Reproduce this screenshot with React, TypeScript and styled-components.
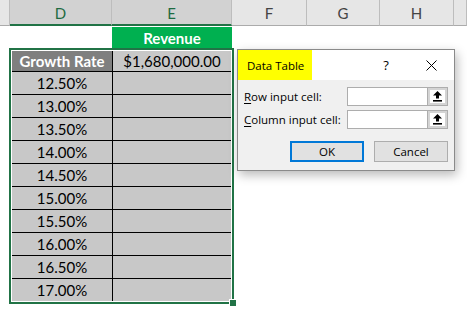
import React from 'react';
import styled, { createGlobalStyle } from 'styled-components';

const GlobalStyle = createGlobalStyle`
  html, body {
    margin: 0;
    padding: 0;
    background: #ffffff;
  }
  body {
    font-family: Lato, "Liberation Sans", sans-serif;
  }
`;

const columns = [
  { key: 'corner', label: '', width: 10, selected: false },
  { key: 'D', label: 'D', width: 102, selected: true },
  { key: 'E', label: 'E', width: 120, selected: true },
  { key: 'F', label: 'F', width: 75, selected: false },
  { key: 'G', label: 'G', width: 73, selected: false },
  { key: 'H', label: 'H', width: 74, selected: false },
  { key: 'I', label: '', width: 13, selected: false },
];

const rates = ['12.50%', '13.00%', '13.50%', '14.00%', '14.50%', '15.00%', '15.50%', '16.00%', '16.50%', '17.00%'];

const Sheet = styled.div`
  position: relative;
  width: 467px;
  height: 318px;
  overflow: hidden;
  background: #ffffff;
`;

const HeaderBar = styled.div`
  display: grid;
  grid-template-columns: ${columns.map((c) => `${c.width}px`).join(' ')};
  height: 26px;
`;

const HeaderCell = styled.div<{ $selected: boolean }>`
  box-sizing: border-box;
  display: flex;
  align-items: center;
  justify-content: center;
  background: ${(p) => (p.$selected ? '#d2d2d2' : '#e6e6e6')};
  color: ${(p) => (p.$selected ? '#1e6b41' : '#444444')};
  border-right: 1px solid #bdbdbd;
  border-bottom: ${(p) => (p.$selected ? '2px solid #217346' : '1px solid #ababab')};
  font-size: 15px;
  padding-top: 1px;
`;

const Body = styled.div`
  padding-left: 9px;
`;

const RevenueRow = styled.div`
  display: flex;
  padding-left: 103px;
  padding-top: 1px;
  height: 21px;
`;

const RevenueCell = styled.div`
  width: 120px;
  background: #00b050;
  color: #ffffff;
  font-weight: 700;
  font-size: 15px;
  display: flex;
  align-items: center;
  justify-content: center;
`;

const TableFrame = styled.div`
  position: relative;
  box-sizing: border-box;
  width: 225px;
  border: 2px solid #217346;
  padding: 1px;
  background: #ffffff;
`;

const TableGrid = styled.div`
  display: grid;
  grid-template-columns: 100px 118px;
  grid-template-rows: 20px;
  grid-auto-rows: 22px;
  gap: 1px;
  background: #000000;
`;

const Cell = styled.div<{ $heading?: boolean }>`
  display: flex;
  align-items: center;
  justify-content: center;
  background: ${(p) => (p.$heading ? '#7f7f7f' : '#c8c8c8')};
  color: ${(p) => (p.$heading ? '#ffffff' : '#000000')};
  font-weight: ${(p) => (p.$heading ? 700 : 400)};
  font-size: 15px;
`;

const FillHandle = styled.div`
  position: absolute;
  right: -4px;
  bottom: -4px;
  width: 6px;
  height: 6px;
  background: #217346;
  border: 1px solid #ffffff;
  border-right: none;
  border-bottom: none;
`;

const Dialog = styled.div`
  position: absolute;
  left: 237px;
  top: 49px;
  width: 218px;
  height: 122px;
  box-sizing: border-box;
  border: 1px solid #8a8a8a;
  background: #f0f0f0;
  box-shadow: 2px 4px 10px rgba(0, 0, 0, 0.28);
  font-family: "Open Sans", "Noto Sans", sans-serif;
  font-size: 11.5px;
  color: #000000;
  display: flex;
  flex-direction: column;
`;

const TitleBar = styled.div`
  display: flex;
  align-items: stretch;
  height: 30px;
  background: #ffffff;
`;

const TitleText = styled.div`
  display: flex;
  align-items: center;
  background: #ffff00;
  padding: 0 8px 0 9px;
`;

const TitleButton = styled.div<{ $width: number }>`
  width: ${(p) => p.$width}px;
  display: flex;
  align-items: center;
  justify-content: center;
  font-size: 13px;
`;

const TitleSpacer = styled.div`
  flex: 1;
`;

const DialogBody = styled.div`
  display: flex;
  flex-direction: column;
  padding: 7px 6px 0 6px;
  gap: 4px;
`;

const FieldRow = styled.div`
  display: flex;
  align-items: center;
  height: 19px;
`;

const FieldLabel = styled.div`
  flex: 1;
  white-space: nowrap;
  u {
    text-decoration-thickness: 1px;
    text-underline-offset: 2px;
  }
`;

const FieldInput = styled.div`
  box-sizing: border-box;
  width: 80px;
  height: 19px;
  background: #ffffff;
  border: 1px solid #adadad;
  border-right: none;
`;

const PickButton = styled.div`
  box-sizing: border-box;
  width: 21px;
  height: 19px;
  border: 1px solid #adadad;
  background: #ffffff;
  box-shadow: inset 0 0 0 2px #d4d4d4;
  display: flex;
  align-items: center;
  justify-content: center;
`;

const ButtonRow = styled.div`
  display: flex;
  justify-content: flex-end;
  gap: 10px;
  margin-top: 8px;
`;

const DialogButton = styled.div<{ $primary?: boolean }>`
  box-sizing: border-box;
  width: 74px;
  height: 21px;
  display: flex;
  align-items: center;
  justify-content: center;
  background: #e1e1e1;
  border: ${(p) => (p.$primary ? '2px solid #0078d7' : '1px solid #adadad')};
`;

const UpArrow = () => (
  <svg width="9" height="11" viewBox="0 0 9 11">
    <polygon points="4.5,0 9,4.5 6,4.5 6,7.5 3,7.5 3,4.5 0,4.5" fill="#000" />
    <rect x="0" y="9" width="9" height="1.6" fill="#000" />
  </svg>
);

const CloseIcon = () => (
  <svg width="11" height="11" viewBox="0 0 11 11">
    <path d="M0.5 0.5 L10.5 10.5 M10.5 0.5 L0.5 10.5" stroke="#000" strokeWidth="1" />
  </svg>
);

export default function App() {
  return (
    <>
      <GlobalStyle />
      <Sheet>
        <HeaderBar>
          {columns.map((c) => (
            <HeaderCell key={c.key} $selected={c.selected}>
              {c.label}
            </HeaderCell>
          ))}
        </HeaderBar>
        <Body>
          <RevenueRow>
            <RevenueCell>Revenue</RevenueCell>
          </RevenueRow>
          <TableFrame>
            <TableGrid>
              <Cell $heading>Growth Rate</Cell>
              <Cell>$1,680,000.00</Cell>
              {rates.map((r) => (
                <React.Fragment key={r}>
                  <Cell>{r}</Cell>
                  <Cell />
                </React.Fragment>
              ))}
            </TableGrid>
            <FillHandle />
          </TableFrame>
        </Body>

        <Dialog>
          <TitleBar>
            <TitleText>Data Table</TitleText>
            <TitleSpacer />
            <TitleButton $width={44}>?</TitleButton>
            <TitleButton $width={46}>
              <CloseIcon />
            </TitleButton>
          </TitleBar>
          <DialogBody>
            <FieldRow>
              <FieldLabel>
                <u>R</u>ow input cell:
              </FieldLabel>
              <FieldInput />
              <PickButton>
                <UpArrow />
              </PickButton>
            </FieldRow>
            <FieldRow>
              <FieldLabel>
                <u>C</u>olumn input cell:
              </FieldLabel>
              <FieldInput />
              <PickButton>
                <UpArrow />
              </PickButton>
            </FieldRow>
            <ButtonRow>
              <DialogButton $primary>OK</DialogButton>
              <DialogButton>Cancel</DialogButton>
            </ButtonRow>
          </DialogBody>
        </Dialog>
      </Sheet>
    </>
  );
}
